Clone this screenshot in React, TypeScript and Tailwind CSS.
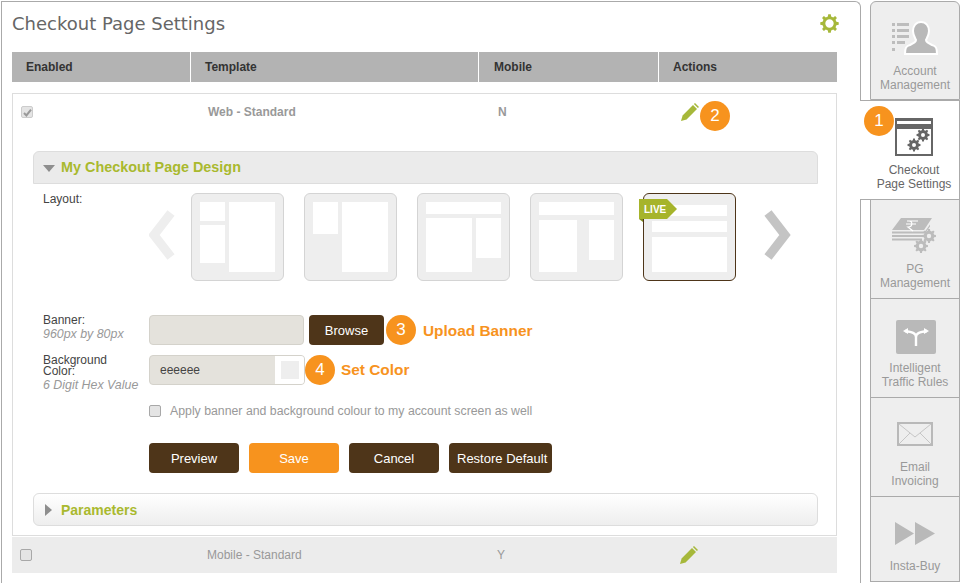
import React from "react";

function gearPath(cx: number, cy: number, r: number, hole: number, teeth = 8) {
  const pts: string[] = [];
  const inner = r * 0.76;
  const step = (Math.PI * 2) / teeth;
  for (let i = 0; i < teeth; i++) {
    const a = i * step - Math.PI / 2;
    const w = step * 0.22;
    const list: [number, number][] = [
      [inner, a - w * 1.35],
      [r, a - w * 0.8],
      [r, a + w * 0.8],
      [inner, a + w * 1.35],
    ];
    list.forEach(([rad, an]) => pts.push(`${(cx + rad * Math.cos(an)).toFixed(2)} ${(cy + rad * Math.sin(an)).toFixed(2)}`));
  }
  const ring = `M${cx - hole} ${cy}a${hole} ${hole} 0 1 0 ${hole * 2} 0a${hole} ${hole} 0 1 0 ${-hole * 2} 0z`;
  return `M${pts.join("L")}z${ring}`;
}

const Gear = ({ cx, cy, r, hole, fill }: { cx: number; cy: number; r: number; hole: number; fill: string }) => (
  <path d={gearPath(cx, cy, r, hole)} fill={fill} fillRule="evenodd" />
);

const Pencil = ({ className = "" }: { className?: string }) => (
  <svg width="18" height="18" viewBox="0 0 18 18" className={`shrink-0 ${className}`}>
    <path d="M0 18l1.6-5.6L12 2l4 4L5.6 16.4z" fill="#a6b83a" />
    <path d="M12.9 1.1L14 0l4 4-1.1 1.1z" fill="#a6b83a" />
  </svg>
);

const Badge = ({ n, className }: { n: number; className: string }) => (
  <span className={`flex h-[30px] w-[30px] shrink-0 items-center justify-center rounded-full bg-[#f7931e] text-[17px] text-white ${className}`}>{n}</span>
);

const Check = ({ checked = false }: { checked?: boolean }) => (
  <span
    className={`flex h-[12px] w-[12px] shrink-0 items-center justify-center rounded-[2px] border ${
      checked ? "border-[#cccccc] bg-[#e4e4e4]" : "border-[#a8a8a8] bg-[#e4e4e4]"
    }`}
  >
    {checked && (
      <svg width="9" height="9" viewBox="0 0 9 9">
        <path d="M1 5l2.4 2.4L8 1.6" fill="none" stroke="#999999" strokeWidth="2" />
      </svg>
    )}
  </span>
);

const Block = ({ className }: { className: string }) => <div className={`bg-white ${className}`} />;

const Tile = ({ children, live = false, className = "" }: { children: React.ReactNode; live?: boolean; className?: string }) => (
  <div className={`relative h-[88px] w-[93px] shrink-0 rounded-md border bg-[#eeeeee] ${live ? "border-[#4e3519]" : "border-[#d4d4d4]"} ${className}`}>
    {children}
    {live && (
      <>
        <div className="absolute left-[-5px] top-[5px] flex h-[20px] w-[38px] items-center bg-[#a6b42b] pl-[5px] text-[10px] font-bold text-white [clip-path:polygon(0_0,28px_0,38px_50%,28px_100%,0_100%)]">
          LIVE
        </div>
        <div className="absolute left-[-5px] top-[25px] h-[3px] w-[4px] bg-[#7d8820] [clip-path:polygon(0_0,100%_0,100%_100%)]" />
      </>
    )}
  </div>
);

const OrangeLabel = ({ children, className }: { children: React.ReactNode; className: string }) => (
  <span className={`text-[15.4px] font-bold text-[#f7931e] ${className}`}>{children}</span>
);

const DarkButton = ({ children, className }: { children: React.ReactNode; className: string }) => (
  <button className={`flex h-[30px] shrink-0 items-center justify-center rounded-[4px] bg-[#4e3519] pt-[1px] text-[13px] text-white ${className}`}>{children}</button>
);

const Tab = ({ icon, lines, active = false, className = "" }: { icon: React.ReactNode; lines: string[]; active?: boolean; className?: string }) => (
  <div
    className={
      active
        ? `relative z-10 mb-[-1px] ml-[-1px] flex h-[100px] w-[100px] flex-col items-center border-y border-r border-[#aaaaaa] bg-white pl-[9px] text-[#666666] ${className}`
        : `ml-[9px] flex h-[99px] w-[90px] flex-col items-center border-b border-l border-r border-[#aaaaaa] bg-[#eeeeee] text-[#999999] ${className}`
    }
  >
    <div className="flex h-[62px] w-full shrink-0 items-center justify-center pt-[10px]">{icon}</div>
    <div className="text-center text-[12px] leading-[14px]">
      {lines.map((l) => (
        <div key={l}>{l}</div>
      ))}
    </div>
  </div>
);

export default function App() {
  return (
    <div className="flex h-[583px] w-[961px] overflow-hidden bg-white font-['Liberation_Sans',Arial,sans-serif]">
      {/* Main panel */}
      <div className="ml-[1px] mt-[1px] h-[600px] w-[860px] shrink-0 rounded-tr-md border-x border-t border-[#aaaaaa] pl-[10px]">
        <div className="flex h-[50px] w-[828px] items-center justify-between pb-[8px]">
          <h1 className="font-['DejaVu_Sans',sans-serif] text-[18px] text-[#666666]">Checkout Page Settings</h1>
          <svg width="19" height="19" viewBox="0 0 20 20" className="mr-[1px]">
            <Gear cx={10} cy={10} r={9.8} hole={4.4} fill="#a6b83a" />
          </svg>
        </div>

        <div className="flex h-[30px] w-[825px] bg-[#b3b3b3] text-[12px] font-bold text-[#333333]">
          <div className="flex w-[179px] items-center border-r border-white pl-[14px]">Enabled</div>
          <div className="flex w-[288px] items-center border-r border-white pl-[14px]">Template</div>
          <div className="flex w-[180px] items-center border-r border-white pl-[15px]">Mobile</div>
          <div className="flex flex-1 items-center pl-[14px]">Actions</div>
        </div>

        {/* Expanded row */}
        <div className="mt-[11px] h-[443px] w-[825px] border border-[#dddddd]">
          <div className="flex h-[57px] pl-[8px] pt-[12px]">
            <Check checked />
            <span className="ml-[175px] w-[290px] text-[12px] font-bold leading-[12px] text-[#999999]">Web - Standard</span>
            <span className="w-[183px] text-[12px] font-bold leading-[12px] text-[#999999]">N</span>
            <Pencil className="mt-[-3px]" />
            <Badge n={2} className="ml-[1px] mt-[-5px]" />
          </div>

          <div className="mx-[20px] flex h-[33px] w-[785px] items-center rounded-t-md border border-[#dddddd] bg-[#ebebeb] pl-[9px] pt-[1px]">
            <svg width="12" height="8" viewBox="0 0 12 8" className="mt-[1px]">
              <path d="M0 0h12L6 7z" fill="#8e8e8e" />
            </svg>
            <span className="ml-[6px] text-[14.4px] font-bold text-[#a9b92e]">My Checkout Page Design</span>
          </div>

          {/* Layout row */}
          <div className="mt-[9px] flex h-[88px]">
            <span className="ml-[30px] w-[106px] text-[12px] leading-[12px] text-[#444444]">Layout:</span>
            <svg width="27" height="50" viewBox="0 0 27 50" className="mt-[17px] shrink-0">
              <path d="M22 3L5 25l17 22" fill="none" stroke="#eeeeee" strokeWidth="9" />
            </svg>
            <div className="ml-[15px] flex gap-[20px]">
              <Tile>
                <div className="flex gap-[4px] p-[8px]">
                  <div className="flex w-[25px] flex-col gap-[4px]">
                    <Block className="h-[19px]" />
                    <Block className="h-[38px]" />
                  </div>
                  <Block className="h-[70px] w-[46px]" />
                </div>
              </Tile>
              <Tile>
                <div className="flex gap-[4px] p-[8px]">
                  <Block className="h-[32px] w-[25px]" />
                  <Block className="h-[70px] w-[46px]" />
                </div>
              </Tile>
              <Tile>
                <div className="flex flex-col gap-[4px] p-[8px]">
                  <Block className="h-[12px] w-[75px]" />
                  <div className="flex gap-[4px]">
                    <Block className="h-[54px] w-[46px]" />
                    <Block className="h-[40px] w-[25px]" />
                  </div>
                </div>
              </Tile>
              <Tile>
                <div className="flex flex-col gap-[5px] p-[8px]">
                  <Block className="h-[13px] w-[75px]" />
                  <div className="flex gap-[12px]">
                    <Block className="h-[52px] w-[38px]" />
                    <Block className="h-[40px] w-[25px]" />
                  </div>
                </div>
              </Tile>
              <Tile live>
                <div className="flex flex-col gap-[5px] px-[8px] pt-[11px]">
                  <Block className="h-[11px] w-[75px]" />
                  <Block className="h-[11px] w-[75px]" />
                  <Block className="h-[35px] w-[75px]" />
                </div>
              </Tile>
            </div>
            <svg width="28" height="50" viewBox="0 0 28 50" className="ml-[27px] mt-[17px] shrink-0">
              <path d="M5 3l17 22L5 47" fill="none" stroke="#c4c4c4" strokeWidth="9" />
            </svg>
          </div>

          {/* Banner */}
          <div className="mt-[34px] flex h-[30px] items-center">
            <div className="ml-[30px] mt-[-6px] w-[106px] text-[12px] leading-[12px] text-[#444444]">
              <div>Banner:</div>
              <div className="mt-[2px] text-[12.4px] italic text-[#999999]">960px by 80px</div>
            </div>
            <div className="h-[30px] w-[155px] rounded-[4px] border border-[#d4d2cb] bg-[#e4e2dc]" />
            <DarkButton className="ml-[5px] w-[75px]">Browse</DarkButton>
            <Badge n={3} className="ml-[2px]" />
            <OrangeLabel className="ml-[7px] pt-[1px]">Upload Banner</OrangeLabel>
          </div>

          {/* Color */}
          <div className="mt-[10px] flex h-[30px] items-center">
            <div className="ml-[30px] mt-[6px] w-[106px] text-[12px] leading-[11px] text-[#444444]">
              <div>Background</div>
              <div>Color:</div>
              <div className="mt-[3px] whitespace-nowrap text-[12.4px] italic text-[#999999]">6 Digit Hex Value</div>
            </div>
            <div className="flex h-[30px] w-[156px] items-center justify-between overflow-hidden rounded-[4px] border border-[#d4d2cb] bg-[#e4e2dc] pl-[10px] text-[12px] text-[#444444]">
              eeeeee
              <span className="flex h-[28px] w-[29px] items-center justify-center bg-white">
                <span className="h-[18px] w-[18px] bg-[#eeeeee]" />
              </span>
            </div>
            <Badge n={4} className="" />
            <OrangeLabel className="ml-[6px]">Set Color</OrangeLabel>
          </div>

          {/* Apply */}
          <div className="ml-[136px] mt-[20px] flex h-[12px] items-center">
            <Check />
            <span className="ml-[9px] pt-[1px] text-[12.3px] text-[#999999]">Apply banner and background colour to my account screen as well</span>
          </div>

          {/* Buttons */}
          <div className="ml-[136px] mt-[26px] flex gap-[10px]">
            <DarkButton className="w-[90px]">Preview</DarkButton>
            <button className="flex h-[30px] w-[90px] items-center justify-center rounded-[4px] bg-[#f7931e] pt-[1px] text-[13px] text-white">Save</button>
            <DarkButton className="w-[90px]">Cancel</DarkButton>
            <DarkButton className="w-[103px] !justify-start whitespace-nowrap pl-[8px]">Restore Default</DarkButton>
          </div>

          <div className="ml-[20px] mt-[20px] flex h-[33px] w-[785px] items-center rounded-md border border-[#dddddd] bg-gradient-to-b from-white to-[#eeeeee] pl-[11px] pt-[1px]">
            <svg width="7" height="12" viewBox="0 0 7 12">
              <path d="M0 0l7 6-7 6z" fill="#8e8e8e" />
            </svg>
            <span className="ml-[9px] text-[14px] font-bold text-[#a9b92e]">Parameters</span>
          </div>
        </div>

        {/* Mobile row */}
        <div className="mt-[1px] flex h-[36px] w-[825px] items-center bg-[#ececec] pl-[8px]">
          <Check />
          <span className="ml-[175px] w-[290px] text-[12px] text-[#999999]">Mobile - Standard</span>
          <span className="w-[183px] text-[12px] text-[#999999]">Y</span>
          <Pencil />
        </div>
      </div>

      {/* Sidebar */}
      <div className="relative mt-[1px] w-[100px] shrink-0">
        <Tab
          className="rounded-tl-md rounded-tr-md border-t"
          lines={["Account", "Management"]}
          icon={
            <svg width="48" height="34" viewBox="0 0 48 34">
              <g fill="#bdbdbd">
                <path d="M1 2h3v3H1zM6 2h12v3H6zM1 8h3v3H1zM6 8h12v3H6zM1 14h3v3H1zM6 14h12v3H6zM1 20h3v3H1zM6 20h8v3H6zM1 27h3v3H1z" />
              </g>
              <path
                d="M30 1c5 0 8 4 8 9 0 4-2 7-3 9 0 2 2 3 6 5 4 1 5 3 5 9H14c0-6 1-8 5-9 4-2 6-3 6-5-1-2-3-5-3-9 0-5 3-9 8-9z"
                fill="#b9b9b9"
                stroke="#ffffff"
                strokeWidth="2"
              />
            </svg>
          }
        />
        <Tab
          active
          lines={["Checkout", "Page Settings"]}
          icon={
            <svg width="38" height="38" viewBox="0 0 38 38">
              <path d="M0 0h38v38H0z" fill="#666666" />
              <path d="M2 3h34v3H2z" fill="#ffffff" />
              <path d="M2 11h34v25H2z" fill="#ffffff" />
              <Gear cx={28} cy={17} r={6.5} hole={2} fill="#666666" />
              <Gear cx={19} cy={27} r={6.5} hole={2} fill="#666666" />
            </svg>
          }
        />
        <Tab
          className="!h-[100px] pt-[1px]"
          lines={["PG", "Management"]}
          icon={
            <svg width="48" height="36" viewBox="0 0 48 36">
              <path d="M10 0h31l-8 12H1z" fill="#bcbcbc" />
              <path d="M1 13.5h33l5-7v2l-5 7H1zM1 17h33l3-4v2l-3 4H1zM1 20.5h30v2H1z" fill="#bcbcbc" />
              <path d="M16 3h11M15 6h10M18 3c4 0 4 6-1 6l5 4" fill="none" stroke="#ffffff" strokeWidth="1.2" />
              <Gear cx={38} cy={18} r={7} hole={2.2} fill="#bcbcbc" />
              <Gear cx={30} cy={28} r={7} hole={2.2} fill="#bcbcbc" />
            </svg>
          }
        />
        <Tab
          lines={["Intelligent", "Traffic Rules"]}
          icon={
            <svg width="40" height="34" viewBox="0 0 40 34" className="ml-[1px] mt-[3px]">
              <rect width="40" height="34" rx="2" fill="#b9b9b9" />
              <path d="M20 26V17C20 13 16 12 9 11M20 17c0-4 4-5 11-6" fill="none" stroke="#ffffff" strokeWidth="2.4" />
              <path d="M7 11l5-3v6zM33 11l-5-3v6z" fill="#ffffff" />
            </svg>
          }
        />
        <Tab
          lines={["Email", "Invoicing"]}
          icon={
            <svg width="36" height="24" viewBox="0 0 36 24">
              <rect x="1" y="1" width="34" height="22" fill="none" stroke="#b9b9b9" strokeWidth="2" />
              <path d="M2 2l16 13L34 2M2 22l11-11M34 22L23 11" fill="none" stroke="#c6c6c6" strokeWidth="1" />
            </svg>
          }
        />
        <Tab
          className="!h-[85px]"
          lines={["Insta-Buy"]}
          icon={
            <svg width="40" height="23" viewBox="0 0 40 23">
              <path d="M0 0l19 11.5L0 23zM20 0l20 11.5L20 23z" fill="#b9b9b9" />
            </svg>
          }
        />
        <Badge n={1} className="absolute left-[3px] top-[105px] z-20" />
      </div>
    </div>
  );
}
